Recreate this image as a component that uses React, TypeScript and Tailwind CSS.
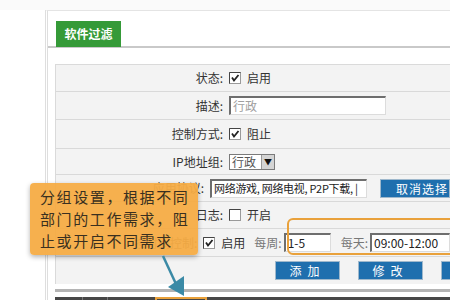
// Software filter settings panel with a callout over it.
import React from 'react'

const font = { fontFamily: '"Noto Sans CJK SC", "Noto Sans", sans-serif' }

function Check({ on }: { on: boolean }) {
  return (
    <svg width="12" height="12" viewBox="0 0 12 12" className="shrink-0">
      <rect x="0.5" y="0.5" width="11" height="11" fill="#fff" stroke="#9a9a9a" />
      <path d="M0.5 11.5V0.5H11.5" fill="none" stroke="#444" />
      {on && <path d="M3 5.5L5 8.5L9.5 3" fill="none" stroke="#222" strokeWidth="1.8" />}
    </svg>
  )
}

function Input({ w, children, muted, small }: { w: string; children?: React.ReactNode; muted?: boolean; small?: boolean }) {
  return (
    <div
      className={`${w} h-[19px] bg-white border border-[#dcdcdc] border-t-[#6e6e6e] border-l-[#6e6e6e] border-t-2 border-l-2 px-[2px] ${small ? 'text-[11px] tracking-[-0.3px]' : 'text-[12px]'} leading-[15px] overflow-hidden whitespace-nowrap ${muted ? 'text-[#a0a0a0]' : 'text-[#222]'}`}
    >
      {children}
    </div>
  )
}

function Btn({ children, w = 'w-[65px]' }: { children: React.ReactNode; w?: string }) {
  return (
    <div className={`${w} h-[19px] shrink-0 bg-[#1f6fae] border border-[#9fb8cc] text-white text-[12px] leading-[17px] text-center tracking-[6px]`}>
      {children}
    </div>
  )
}

const rows: Array<{ label: string; h: string; value: React.ReactNode }> = [
  {
    label: '状态:',
    h: 'h-[27px]',
    value: (
      <div className="flex items-center gap-[6px]">
        <Check on />
        <span>启用</span>
      </div>
    ),
  },
  { label: '描述:', h: 'h-[28px]', value: <Input w="w-[157px]" muted>行政</Input> },
  {
    label: '控制方式:',
    h: 'h-[29px]',
    value: (
      <div className="flex items-center gap-[6px]">
        <Check on />
        <span>阻止</span>
      </div>
    ),
  },
  {
    label: 'IP地址组:',
    h: 'h-[26px]',
    value: (
      <div className="w-[46px] h-[16px] flex items-center bg-white border border-[#7a7a7a] text-[12px] text-[#555]">
        <span className="flex-1 pl-[2px] leading-[14px]">行政</span>
        <span className="w-[13px] h-[14px] bg-[#d4d4d4] border-l border-[#999] text-[8px] leading-[14px] text-center text-[#111]">▼</span>
      </div>
    ),
  },
  {
    label: '应用协议:',
    h: 'h-[27px]',
    value: (
      <div className="flex items-center gap-[13px]">
        <Input w="w-[157px]" small>网络游戏, 网络电视, P2P下载, |</Input>
        <Btn w="w-[70px]">
          <span className="tracking-[1px] pl-[14px]">取消选择</span>
        </Btn>
      </div>
    ),
  },
  {
    label: '日志:',
    h: 'h-[27px]',
    value: (
      <div className="flex items-center gap-[6px]">
        <Check on={false} />
        <span>开启</span>
      </div>
    ),
  },
  {
    label: '按时间控制:',
    h: 'h-[28px]',
    value: (
      <div className="flex items-center whitespace-nowrap">
        <Check on />
        <span className="ml-[6px]">启用</span>
        <span className="ml-[9px] text-[#777]">每周:</span>
        <div className="ml-[2px]">
          <Input w="w-[47px]">1-5</Input>
        </div>
        <span className="ml-[10px] text-[#777]">每天:</span>
        <div className="ml-[2px]">
          <Input w="w-[80px]">09:00-12:00</Input>
        </div>
      </div>
    ),
  },
]

export default function App() {
  return (
    <div className="relative w-[450px] h-[300px] overflow-hidden bg-white text-[12px] text-[#333]" style={font}>
      <div className="absolute inset-x-0 top-0 h-[10px] bg-[#fafafa]" />
      {/* panel */}
      <div className="ml-[45px] mt-[10px] border-l-[3px] border-double border-t border-[#dedede] border-t-[#e4e4e4]">
        <div className="h-[37px] pl-[8px] pt-[10px] border-b-2 border-[#c9c9c9] flex">
          <div className="w-[65px] h-[26px] bg-[#359a38] text-white font-bold text-[12px] leading-[26px] text-center">
            软件过滤
          </div>
        </div>
        <div className="h-[16px]" />
        <div className="ml-[7px] border-l border-t border-[#dadada] bg-[#f3f3f3]">
          {rows.map(({ label, h, value }) => (
            <div key={label} className={`${h} flex items-center border-b border-[#d9d9d9]`}>
              <div className="w-[170px] text-right pr-[3px] whitespace-nowrap">{label}</div>
              <div className="ml-[3px]">{value}</div>
            </div>
          ))}
          <div className="h-[27px] flex items-center pl-[219px] gap-[18px]">
            <Btn>添加</Btn>
            <Btn>修改</Btn>
            <Btn>删除</Btn>
          </div>
        </div>
        <div className="h-[5px]" />
        <div className="ml-[7px] h-[3px] bg-[#b4b4b4]" />
        <div className="h-[5px]" />
        <div className="ml-[7px] h-[10px] bg-[#474747] flex">
          <div className="w-[28px] border-r border-[#777]" />
          <div className="w-[25px] border-r border-[#777]" />
          <div className="w-[47px]" />
          <div className="w-[52px] border-2 border-b-0 border-[#e9a13b]" />
        </div>
      </div>

      {/* highlight around the time inputs */}
      <div className="absolute left-[287px] top-[218px] w-[190px] h-[37px] border-2 border-[#e9a13b] rounded-[6px]" />

      {/* callout */}
      <div className="absolute left-[30px] top-[183px] w-[168px] h-[72px] rounded-[4px] bg-[#f5ac45]/95 shadow-[0_2px_5px_rgba(0,0,0,0.3)] pl-[10px] pt-[3px] text-[15px] leading-[22px] tracking-[1.6px] text-[#3a3020]">
        <div>分组设置，根据不同</div>
        <div>部门的工作需求，阻</div>
        <div>止或开启不同需求</div>
      </div>
      <svg className="absolute left-0 top-0" width="450" height="300">
        <line x1="163" y1="256" x2="176" y2="284" stroke="#3b8aa6" strokeWidth="2.5" />
        <polygon points="168,287 184,276 184,296" fill="#3b8aa6" />
      </svg>
    </div>
  )
}
